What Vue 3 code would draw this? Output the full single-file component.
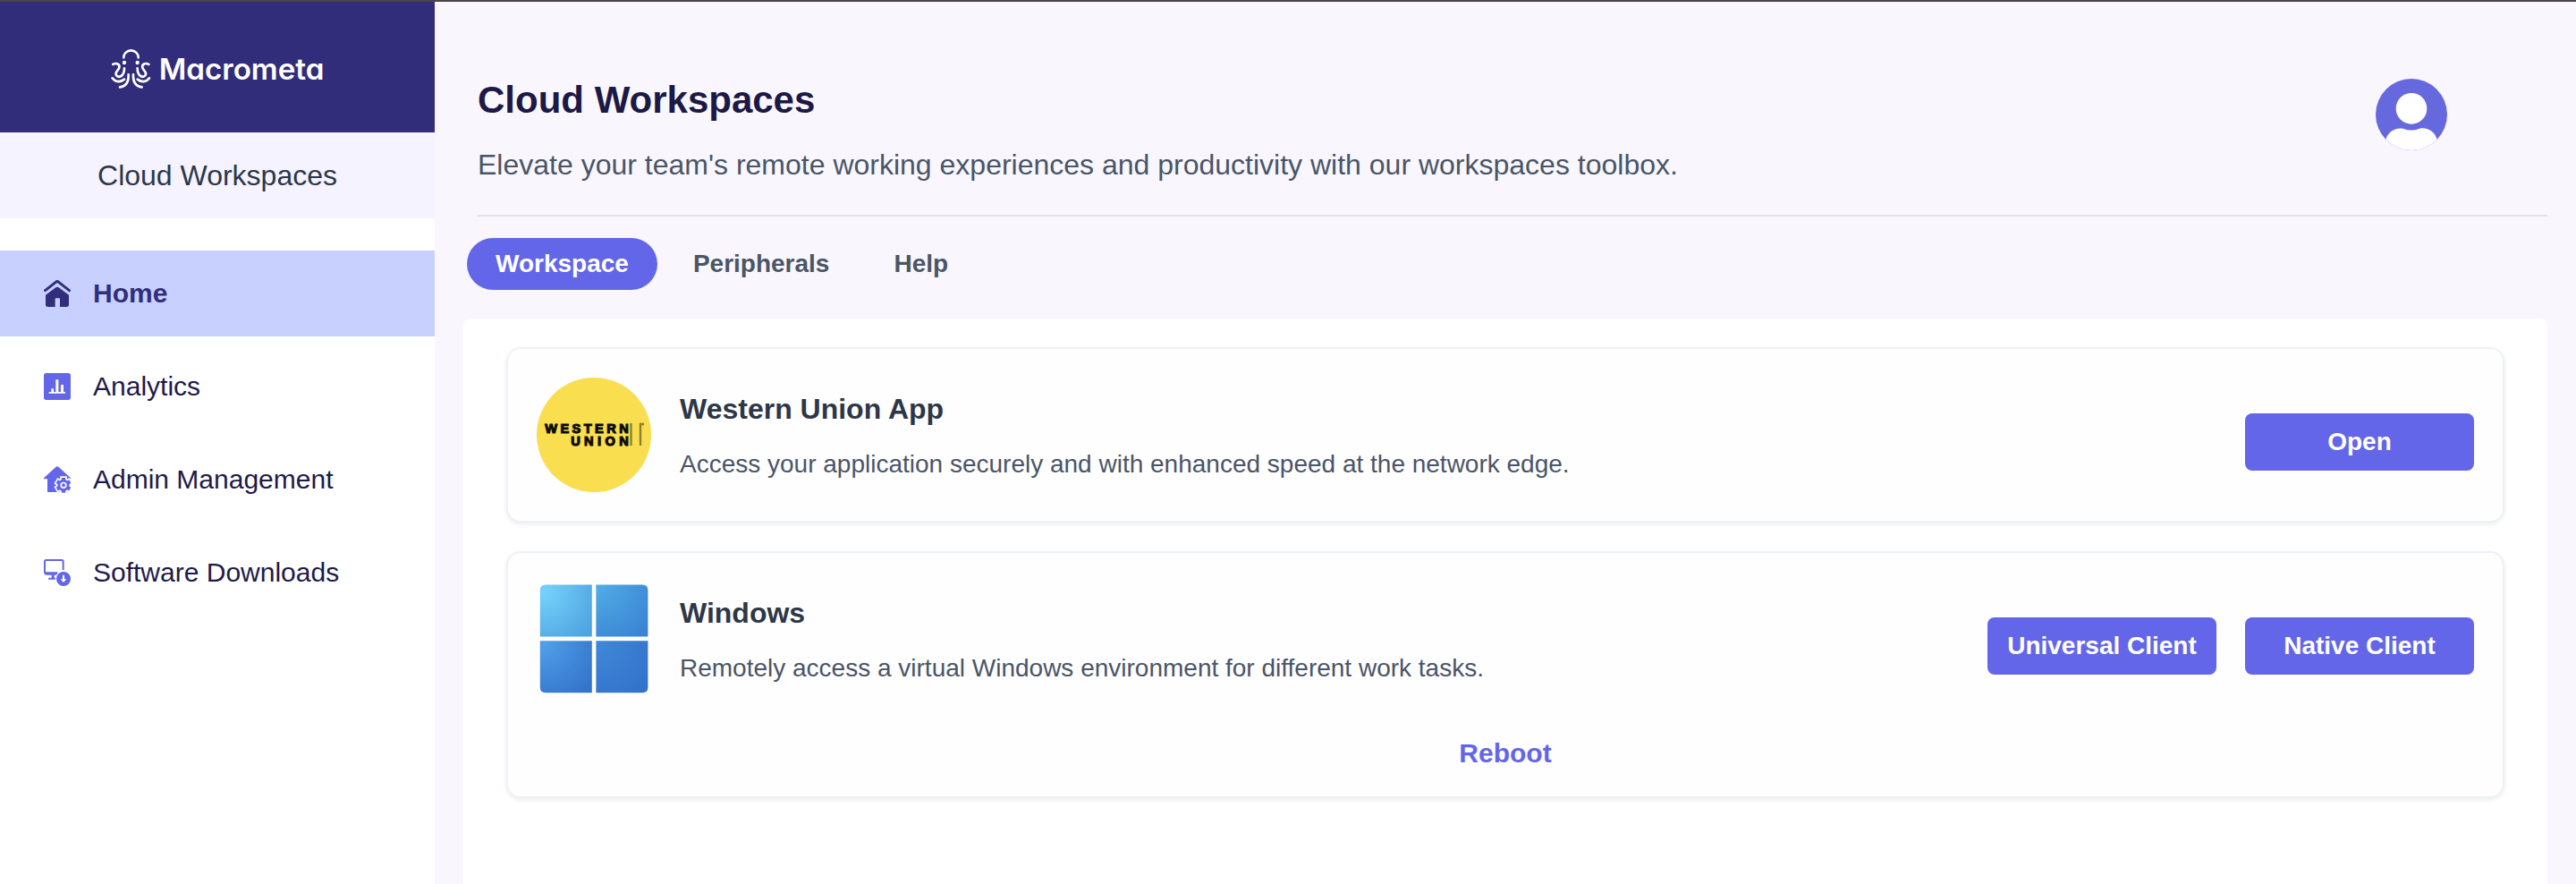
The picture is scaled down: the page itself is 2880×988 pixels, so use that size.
<script setup>
const navItems = [
  { id: 'home', label: 'Home', active: true },
  { id: 'analytics', label: 'Analytics' },
  { id: 'admin', label: 'Admin Management' },
  { id: 'downloads', label: 'Software Downloads' },
]

const tabs = [
  { label: 'Workspace', active: true },
  { label: 'Peripherals' },
  { label: 'Help' },
]

const workspaces = [
  {
    id: 'western-union',
    title: 'Western Union App',
    description: 'Access your application securely and with enhanced speed at the network edge.',
    actions: ['Open'],
  },
  {
    id: 'windows',
    title: 'Windows',
    description: 'Remotely access a virtual Windows environment for different work tasks.',
    actions: ['Universal Client', 'Native Client'],
    footer: 'Reboot',
  },
]
</script>

<template>
  <div class="app">
    <aside class="sidebar">
      <div class="brand">
        <svg class="brand-logo" viewBox="0 0 240 48" aria-label="Macrometa">
          <g transform="translate(0.3 1.3) scale(0.33333) translate(-373 -163)" fill="none" stroke="#fff" stroke-width="8" stroke-linecap="round">
            <path d="M415 193 A24.5 24 0 0 1 464 193" />
            <circle cx="417" cy="210" r="6.5" fill="#fff" stroke="none" />
            <circle cx="461" cy="210" r="6.5" fill="#fff" stroke="none" />
            <path d="M379 216 C390 209 403 216 400 227 C397 238 384 241 390 252 C397 262 417 258 417 229" />
            <path d="M499 216 C488 209 475 216 478 227 C481 238 494 241 488 252 C481 262 461 258 461 229" />
            <path d="M377 262 C388 277 405 276 417 266" />
            <path d="M501 262 C490 277 473 276 461 266" />
            <path d="M431 250 C432 275 425 290 402 292" />
            <path d="M447 250 C446 275 453 290 476 292" />
          </g>
          <text class="brand-name" x="53.8" y="36" textLength="184.500" lengthAdjust="spacingAndGlyphs">Macrometa</text>
        </svg>
      </div>
      <div class="product">Cloud Workspaces</div>
      <nav class="nav">
        <a v-for="item in navItems" :key="item.id" class="nav-item" :class="{ active: item.active }">
          <svg v-if="item.id === 'home'" class="nav-icon" viewBox="0 0 90 90">
            <path d="M4.500 35 L40 7 Q45 3 50 7 L85.500 35" fill="none" stroke="#312e7c" stroke-width="9" stroke-linecap="round" />
            <path d="M6 50 L40 25 Q45 22 50 25 L84 50 V82 Q84 90 76 90 H54 V64 Q54 61 51 61 H41 Q38 61 38 64 V90 H14 Q6 90 6 82 Z" fill="#312e7c" />
          </svg>
          <svg v-else-if="item.id === 'analytics'" class="nav-icon" viewBox="0 0 90 90">
            <rect width="90" height="90" rx="8" fill="#6366e8" />
            <path d="M25 52 h8 v11 h7 V22 h9 V63 h8 V39 h9 V63 h6 v5 H17 v-5 h8 Z" fill="#fff" />
          </svg>
          <svg v-else-if="item.id === 'admin'" class="nav-icon" viewBox="0 0 90 90">
            <path d="M40 3 Q45 -2 50 3 L90 40 V43 H78 V87 H12 V43 H0 V40 Z" fill="#6366e8" />
            <g stroke="#fff" stroke-width="23" stroke-linecap="butt">
              <circle cx="66" cy="64" r="24" fill="#fff" stroke="none" />
              <path d="M66 34 V94 M40 49 L92 79 M40 79 L92 49" />
            </g>
            <g stroke="#6366e8" stroke-width="13">
              <circle cx="66" cy="64" r="19.500" fill="#6366e8" stroke="none" />
              <path d="M66 39 V89.500 M44 51.500 L88 76.500 M44 76.500 L88 51.500" />
            </g>
            <circle cx="66" cy="64" r="8.500" fill="#6366e8" stroke="#fff" stroke-width="5" />
          </svg>
          <svg v-else class="nav-icon" viewBox="0 0 90 90">
            <path d="M65 36 V8 Q65 3 60 3 H8 Q3 3 3 8 V41 Q3 48 8 48 H45" fill="none" stroke="#6366e8" stroke-width="6" />
            <path d="M3 43 H47 L41 53 H8 Q2 52 2 46 Z" fill="#6366e8" />
            <path d="M26 52 H35 V62 H39 V68 H18 Q15 68 15 65 Q15 62 18 62 H26 Z" fill="#6366e8" />
            <circle cx="66" cy="66" r="24" fill="#6366e8" />
            <path d="M63 53 H69 V67 H76 L66 78 L56 67 H63 Z" fill="#fff" />
          </svg>
          <span>{{ item.label }}</span>
        </a>
      </nav>
    </aside>

    <main class="main">
      <header class="header">
        <div class="heading">
          <h1 class="title">Cloud Workspaces</h1>
          <p class="subtitle">Elevate your team's remote working experiences and productivity with our workspaces toolbox.</p>
        </div>
        <svg class="avatar" viewBox="0 0 240 240">
          <defs>
            <clipPath id="avatar-clip"><circle cx="120" cy="120" r="120" /></clipPath>
          </defs>
          <g clip-path="url(#avatar-clip)">
            <rect width="240" height="240" fill="#6669dd" />
            <circle cx="120" cy="100" r="52" fill="#fff" />
            <path d="M34 203 C42 178 65 163 92 167 Q120 178 147 167 C176 162 198 178 206 203 V240 H34 Z" fill="#fff" />
          </g>
        </svg>
      </header>

      <div class="tabs">
        <button v-for="tab in tabs" :key="tab.label" class="tab" :class="{ active: tab.active }">{{ tab.label }}</button>
      </div>

      <section class="panel">
        <article v-for="ws in workspaces" :key="ws.id" class="card">
          <div class="card-row">
            <svg v-if="ws.id === 'western-union'" class="card-logo" viewBox="0 0 128 128">
              <circle cx="64" cy="64" r="64" fill="#f9de4f" />
              <g class="wu-text">
                <text x="9.200" y="62.400" textLength="93.500">WESTERN</text>
                <text x="38.200" y="75.600" textLength="64.500">UNION</text>
              </g>
              <path d="M105.500 51 V76 M116 76 V52 H120" fill="none" stroke="#8f802f" stroke-width="2.400" />
            </svg>
            <svg v-else class="card-logo" viewBox="0 0 128 128">
              <defs>
                <radialGradient id="win-a" gradientUnits="userSpaceOnUse" cx="8" cy="12" r="68">
                  <stop offset="0" stop-color="#76d2fb" /><stop offset="1" stop-color="#4da2df" />
                </radialGradient>
                <radialGradient id="win-b" gradientUnits="userSpaceOnUse" cx="68" cy="4" r="76">
                  <stop offset="0" stop-color="#50ade6" /><stop offset="1" stop-color="#3a82d3" />
                </radialGradient>
                <radialGradient id="win-c" gradientUnits="userSpaceOnUse" cx="8" cy="70" r="68">
                  <stop offset="0" stop-color="#509fe8" /><stop offset="1" stop-color="#3474cb" />
                </radialGradient>
                <radialGradient id="win-d" gradientUnits="userSpaceOnUse" cx="68" cy="68" r="76">
                  <stop offset="0" stop-color="#3f88d8" /><stop offset="1" stop-color="#3272ca" />
                </radialGradient>
              </defs>
              <path d="M10 3.500 H61.800 V61.500 H3.800 V9.700 Q3.800 3.500 10 3.500 Z" fill="url(#win-a)" />
              <path d="M66.400 3.500 H118.200 Q124.400 3.500 124.400 9.700 V61.500 H66.400 Z" fill="url(#win-b)" />
              <path d="M3.800 66.200 H61.800 V124.200 H10 Q3.800 124.200 3.800 118 Z" fill="url(#win-c)" />
              <path d="M66.400 66.200 H124.400 V118 Q124.400 124.200 118.200 124.200 H66.400 Z" fill="url(#win-d)" />
            </svg>
            <div class="card-text">
              <h2 class="card-title">{{ ws.title }}</h2>
              <p class="card-desc">{{ ws.description }}</p>
            </div>
            <div class="card-actions">
              <button v-for="action in ws.actions" :key="action" class="btn">{{ action }}</button>
            </div>
          </div>
          <button v-if="ws.footer" class="link-btn">{{ ws.footer }}</button>
        </article>
      </section>
    </main>
  </div>
</template>

<style>
body {
  margin: 0;
  overflow: hidden;
}
</style>

<style scoped>
.app {
  box-sizing: border-box;
  display: flex;
  width: 100%;
  height: 988px;
  border-top: 2px solid #4b4449;
  background: #f9f7fd;
  font-family: "Liberation Sans", Arial, sans-serif;
  overflow: hidden;
}
button {
  font-family: inherit;
  border: 0;
  padding: 0;
  background: none;
}
.sidebar {
  width: 486px;
  flex: none;
  background: #fff;
}
.brand {
  height: 146px;
  display: flex;
  box-sizing: border-box;
  padding: 51px 0 0 124px;
  background: #312d7b;
}
.brand-logo {
  width: 240px;
  height: 48px;
}
.brand-name {
  fill: #fff;
  font-family: Inter, sans-serif;
  font-size: 32px;
  font-weight: 600;
  font-feature-settings: "cv11";
}
.product {
  height: 96px;
  line-height: 96px;
  text-align: center;
  font-size: 32px;
  color: #2d3748;
  background: #f5f3ff;
}
.nav {
  display: flex;
  flex-direction: column;
  gap: 8px;
  margin-top: 36px;
}
.nav-item {
  display: flex;
  align-items: center;
  gap: 25px;
  height: 96px;
  padding-left: 49px;
  font-size: 30px;
  color: #1e1b4b;
}
.nav-item.active {
  background: #c8d1fd;
  color: #312e7c;
  font-weight: 700;
}
.nav-icon {
  width: 30px;
  height: 30px;
}
.main {
  flex: 1;
  display: flex;
  flex-direction: column;
  padding: 0 32px;
}
.header {
  display: flex;
  justify-content: space-between;
  align-items: flex-start;
  margin-left: 16px;
  padding: 85px 112px 32px 0;
  border-bottom: 2px solid #dfe4ec;
}
.title {
  margin: 0 0 23px;
  font-size: 42px;
  line-height: 50px;
  color: #1c1946;
}
.subtitle {
  margin: 0;
  font-size: 32px;
  line-height: 48px;
  color: #4a5568;
}
.avatar {
  width: 80px;
  height: 80px;
  margin-top: 1px;
}
.tabs {
  display: flex;
  gap: 8px;
  margin: 24px 0 32px 4px;
}
.tab {
  height: 58px;
  padding: 0 32px;
  border-radius: 29px;
  font-size: 28px;
  font-weight: 700;
  color: #4a5568;
}
.tab.active {
  background: #6366e8;
  color: #fff;
}
.panel {
  flex: 1;
  display: flex;
  flex-direction: column;
  gap: 32px;
  padding: 32px 48px 0;
  border-radius: 8px 8px 0 0;
  background: #fff;
}
.card {
  padding: 32px;
  border: 2px solid #edf2f7;
  border-radius: 16px;
  background: #fefefe;
  box-shadow: 0 2px 6px rgba(0, 0, 0, 0.05), 0 2px 4px rgba(0, 0, 0, 0.03);
}
.card-row {
  display: flex;
  gap: 32px;
  height: 128px;
}
.card-logo {
  width: 128px;
  height: 128px;
  flex: none;
}
.wu-text {
  font-family: "Liberation Sans", Arial, sans-serif;
  font-size: 14.6px;
  font-weight: 700;
  fill: #0c0b04;
  stroke: #0c0b04;
  stroke-width: 1.1px;
}
.card-text {
  flex: 1;
  padding-top: 11px;
}
.card-title {
  margin: 0 0 20px;
  font-size: 32px;
  line-height: 48px;
  color: #2d3748;
}
.card-desc {
  margin: 0;
  font-size: 28px;
  line-height: 36px;
  color: #4a5568;
}
.card-actions {
  display: flex;
  gap: 32px;
  padding-top: 40px;
}
.btn {
  width: 256px;
  height: 64px;
  border-radius: 8px;
  background: #6366e8;
  color: #fff;
  font-size: 28px;
  font-weight: 700;
}
.link-btn {
  display: block;
  margin: 48px auto 0;
  height: 32px;
  line-height: 32px;
  font-size: 30px;
  font-weight: 700;
  color: #6366e8;
}
</style>
